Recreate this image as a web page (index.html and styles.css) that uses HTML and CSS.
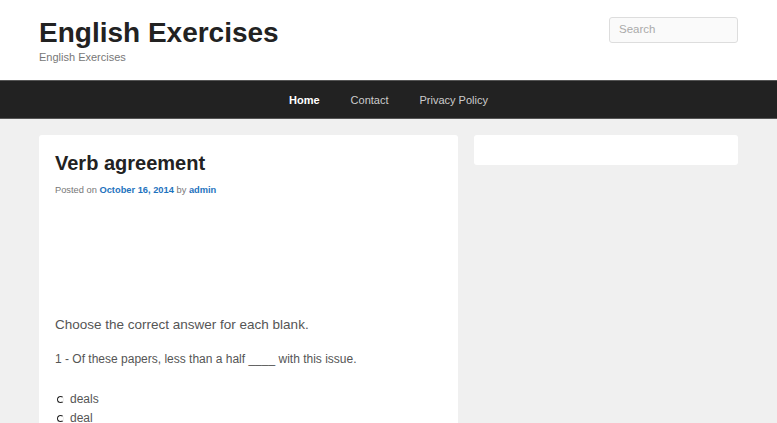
FILE: index.html
```html
<!DOCTYPE html>
<html lang="en">
<head>
    <meta charset="UTF-8">
    <meta name="viewport" content="width=device-width, initial-scale=1.0">
    <title>Verb agreement | English Exercises</title>
    <link rel="stylesheet" href="styles.css">
</head>
<body>
    <header class="site-header">
        <div class="wrap header-inner">
            <div class="branding">
                <h1 class="site-title">English Exercises</h1>
                <p class="site-desc">English Exercises</p>
            </div>
            <form class="search-form">
                <input type="text" class="search-field" placeholder="Search">
            </form>
        </div>
    </header>

    <nav class="main-nav">
        <ul>
            <li><a href="#" class="current">Home</a></li>
            <li><a href="#">Contact</a></li>
            <li><a href="#">Privacy Policy</a></li>
        </ul>
    </nav>

    <div class="wrap content-area">
        <article class="post">
            <h2 class="post-title">Verb agreement</h2>
            <div class="post-meta">Posted on <a href="#">October 16, 2014</a> by <a href="#">admin</a></div>
            <div class="ad-space"></div>
            <p class="intro">Choose the correct answer for each blank.</p>
            <p class="question">1 - Of these papers, less than a half ____ with this issue.</p>
            <div class="answers">
                <label class="answer"><input type="radio" name="q1"> deals</label>
                <label class="answer"><input type="radio" name="q1"> deal</label>
                <label class="answer"><input type="radio" name="q1"> dealing</label>
            </div>
        </article>
        <aside class="sidebar">
            <div class="widget"></div>
        </aside>
    </div>
</body>
</html>
```

FILE: styles.css
```css
body {
    margin: 0;
    background: #f0f0f0;
    font-family: "Liberation Sans", Arial, sans-serif;
    color: #555;
}
.wrap {
    width: 699px;
    margin: 0 auto;
}
.site-header {
    background: #fff;
    height: 80px;
}
.header-inner {
    display: flex;
    justify-content: space-between;
    align-items: flex-start;
}
.site-title {
    margin: 0;
    padding-top: 16px;
    font-size: 28px;
    line-height: 34px;
    color: #222;
}
.site-desc {
    margin: 1px 0 0;
    font-size: 11px;
    color: #777;
}
.search-form {
    margin-top: 17px;
}
.search-field {
    width: 129px;
    height: 26px;
    box-sizing: border-box;
    border: 1px solid #ddd;
    border-radius: 3px;
    background: #fafafa;
    padding: 0 9px 3px;
    font-family: inherit;
    font-size: 11.5px;
    color: #555;
}
.search-field::placeholder {
    color: #aaa;
}
.main-nav {
    background: #222;
    border-top: 1px solid #555;
    border-bottom: 1px solid #555;
    height: 37px;
}
.main-nav ul {
    list-style: none;
    margin: 0;
    padding: 0;
    display: flex;
    justify-content: center;
}
.main-nav a {
    display: block;
    padding: 0 15.5px;
    line-height: 38px;
    font-size: 11px;
    color: #ccc;
    text-decoration: none;
}
.main-nav a.current {
    color: #fff;
    font-weight: bold;
}
.content-area {
    display: flex;
    align-items: flex-start;
    gap: 16px;
    padding-top: 16px;
}
.post {
    width: 419px;
    height: 300px;
    background: #fff;
    border-radius: 3px;
    padding: 16px 16px 0;
    box-sizing: border-box;
}
.post-title {
    margin: 0;
    font-size: 20px;
    line-height: 24px;
    color: #222;
}
.post-meta {
    margin-top: 10px;
    font-size: 9.3px;
    color: #777;
}
.post-meta a {
    color: #1e73be;
    font-weight: bold;
    text-decoration: none;
}
.ad-space {
    height: 122px;
}
.intro, .question {
    margin: 0 0 18px;
    font-size: 13.5px;
    line-height: 16px;
}
.question {
    font-size: 12px;
    margin-bottom: 23px;
}
.answer {
    display: flex;
    align-items: center;
    gap: 6px;
    font-size: 12px;
    line-height: 19px;
    padding-left: 2px;
}
.answer input {
    appearance: none;
    margin: 0;
    width: 7px;
    height: 7px;
    border: 1.5px solid #222;
    border-right-color: #eee;
    border-radius: 50%;
}
.sidebar {
    width: 264px;
}
.widget {
    height: 30px;
    background: #fff;
    border-radius: 3px;
}
```
